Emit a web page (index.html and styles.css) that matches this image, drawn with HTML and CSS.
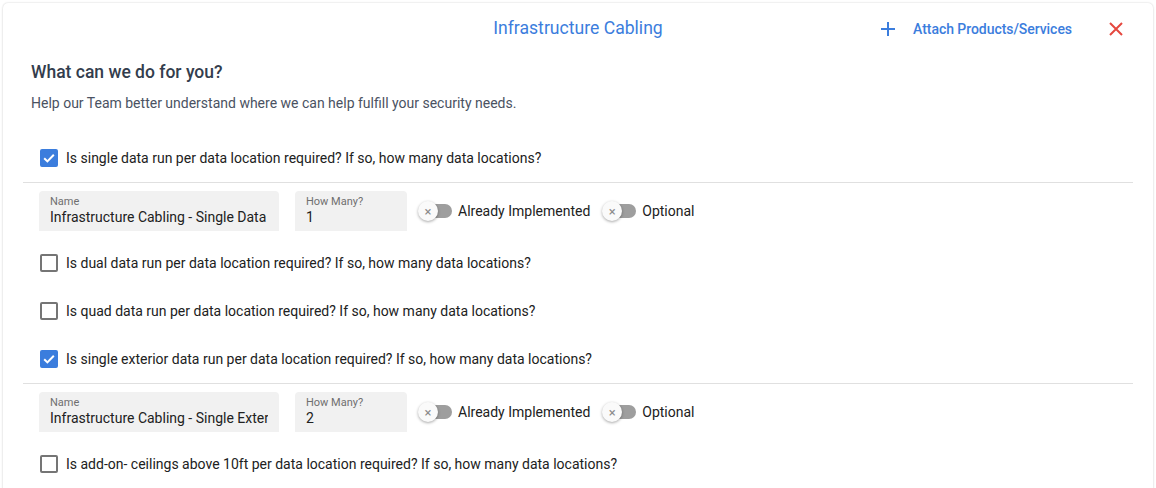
FILE: index.html
```html
<!DOCTYPE html>
<html>
<head>
<meta charset="utf-8">
<link rel="stylesheet" href="styles.css">
</head>
<body>
<div class="card">
  <div class="header">
    <div class="side"></div>
    <div class="title">Infrastructure Cabling</div>
    <div class="side actions">
      <button class="attach">
        <svg width="16" height="16" viewBox="0 0 16 16"><path d="M8 1v14M1 8h14" stroke="#3b7ddd" stroke-width="2" fill="none"/></svg>
        <span>Attach Products/Services</span>
      </button>
      <button class="close">
        <svg width="16" height="16" viewBox="0 0 16 16"><path d="M2 2l12 12M14 2L2 14" stroke="#e5483f" stroke-width="2" fill="none"/></svg>
      </button>
    </div>
  </div>
  <div class="content">
    <h2 class="heading">What can we do for you?</h2>
    <p class="help">Help our Team better understand where we can help fulfill your security needs.</p>

    <div class="question checked">
      <span class="box"><svg width="14" height="14" viewBox="0 0 14 14"><path d="M2.2 7.2l3.2 3.2 6.4-6.6" stroke="#fff" stroke-width="2" fill="none"/></svg></span>
      <span class="qtext">Is single data run per data location required? If so, how many data locations?</span>
    </div>
    <div class="divider"></div>
    <div class="fields">
      <div class="field name"><span class="flabel">Name</span><span class="fvalue">Infrastructure Cabling - Single Data Run</span></div>
      <div class="field count"><span class="flabel">How Many?</span><span class="fvalue">1</span></div>
      <div class="toggle"><span class="switch"><span class="track"></span><span class="thumb">×</span></span><span class="tlabel">Already Implemented</span></div>
      <div class="toggle"><span class="switch"><span class="track"></span><span class="thumb">×</span></span><span class="tlabel">Optional</span></div>
    </div>

    <div class="question">
      <span class="box"></span>
      <span class="qtext">Is dual data run per data location required? If so, how many data locations?</span>
    </div>
    <div class="question">
      <span class="box"></span>
      <span class="qtext">Is quad data run per data location required? If so, how many data locations?</span>
    </div>
    <div class="question checked">
      <span class="box"><svg width="14" height="14" viewBox="0 0 14 14"><path d="M2.2 7.2l3.2 3.2 6.4-6.6" stroke="#fff" stroke-width="2" fill="none"/></svg></span>
      <span class="qtext">Is single exterior data run per data location required? If so, how many data locations?</span>
    </div>
    <div class="divider"></div>
    <div class="fields">
      <div class="field name"><span class="flabel">Name</span><span class="fvalue">Infrastructure Cabling - Single Exterior Data Run</span></div>
      <div class="field count"><span class="flabel">How Many?</span><span class="fvalue">2</span></div>
      <div class="toggle"><span class="switch"><span class="track"></span><span class="thumb">×</span></span><span class="tlabel">Already Implemented</span></div>
      <div class="toggle"><span class="switch"><span class="track"></span><span class="thumb">×</span></span><span class="tlabel">Optional</span></div>
    </div>
    <div class="question">
      <span class="box"></span>
      <span class="qtext">Is add-on- ceilings above 10ft per data location required? If so, how many data locations?</span>
    </div>
  </div>
</div>
</body>
</html>
```
FILE: styles.css
```css
* { box-sizing: border-box; }
html, body { margin: 0; background: #ffffff; height: 488px; overflow: hidden; }
body { font-family: Roboto, "Liberation Sans", sans-serif; color: #212121; padding: 3px 3px 0 3px; }

.card {
  background: #fff;
  border-radius: 5px 5px 0 0;
  box-shadow: 0 0 2px rgba(0,0,0,0.18), 0 1px 3px rgba(0,0,0,0.06);
  height: 520px;
  padding: 0 20px;
}

.header {
  height: 50px;
  display: grid;
  grid-template-columns: 1fr auto 1fr;
  align-items: center;
  padding-top: 1px;
}
.title { font-size: 17.6px; color: #3b7ddd; font-weight: 400; margin-top: -2px; }
.actions { display: flex; justify-content: flex-end; align-items: center; }
button { background: none; border: 0; padding: 0; font: inherit; cursor: pointer; display: flex; align-items: center; }
.attach { color: #3b7ddd; font-size: 14px; font-weight: 500; gap: 17px; margin-right: 36px; }
.attach span { letter-spacing: -0.05px; }
.attach svg { display: block; }
.close { margin-right: 9px; }

.heading { margin: 7px 0 0 8px; font-size: 17.5px; line-height: 24px; font-weight: 500; color: #333d4d; }
.help { margin: 9px 0 0 8px; font-size: 14px; line-height: 20px; color: #4a5262; }

.question { height: 48px; display: flex; align-items: center; padding-left: 17px; font-size: 14px; color: #212121; }
.help + .question { margin-top: 21px; }
.box {
  width: 18px; height: 18px; border: 2px solid #757575; border-radius: 2px;
  display: flex; align-items: center; justify-content: center; margin-right: 8px; flex: none;
}
.checked .box { background: #3b7ddd; border-color: #3b7ddd; }
.box svg { display: block; }

.divider { height: 1px; background: #e0e0e0; }

.fields { display: flex; align-items: center; padding: 8px 0 8px 16px; }
.field {
  height: 40px; background: #f1f1f1; border-radius: 4px 4px 0 0;
  padding: 5px 11px 0 11px; display: flex; flex-direction: column; overflow: hidden;
}
.field.name { width: 240px; }
.field.count { width: 112px; margin-left: 16px; }
.flabel { font-size: 11px; line-height: 12px; color: #6f6f6f; }
.fvalue { font-size: 14px; line-height: 19px; color: #212121; white-space: nowrap; overflow: hidden; }

.toggle { display: flex; align-items: center; font-size: 14px; margin-left: 11px; }
.toggle + .toggle { margin-left: 12px; }
.switch { position: relative; width: 34px; height: 20px; display: block; }
.track { position: absolute; left: 2px; top: 3px; width: 32px; height: 14px; border-radius: 7px; background: #9e9e9e; }
.thumb {
  position: absolute; left: 0; top: 0; width: 20px; height: 20px; border-radius: 50%;
  background: #fafafa; box-shadow: 0 1px 3px rgba(0,0,0,0.35);
  display: flex; align-items: center; justify-content: center;
  font-size: 13px; color: #8a8a8a; line-height: 1;
}
.tlabel { margin-left: 6px; color: #212121; }
```
